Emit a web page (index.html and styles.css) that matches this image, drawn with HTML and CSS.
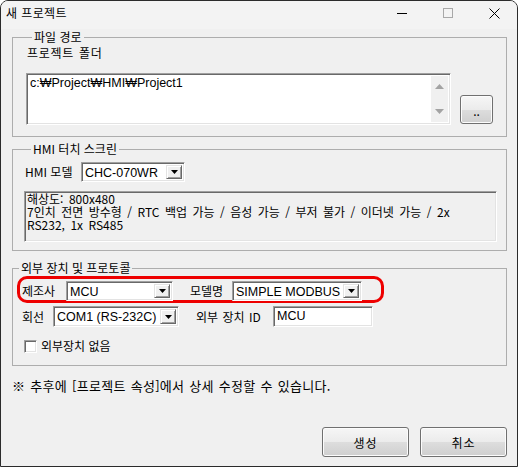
FILE: index.html
```html
<!DOCTYPE html>
<html lang="ko">
<head>
  <meta charset="UTF-8">
  <meta name="viewport" content="width=device-width, initial-scale=1.0">
  <title>새 프로젝트</title>
  <link rel="stylesheet" href="styles.css">
</head>
<body>
  <div class="window">
    <!-- Title bar -->
    <div class="titlebar">
      <span class="title">새 프로젝트</span>
      <div class="caption">
        <span class="caption-btn">
          <svg width="10" height="10" viewBox="0 0 10 10"><line x1="0" y1="5.5" x2="10" y2="5.5" stroke="#000" stroke-width="1"/></svg>
        </span>
        <span class="caption-btn">
          <svg width="10" height="10" viewBox="0 0 10 10"><rect x="0.5" y="0.5" width="9" height="9" fill="none" stroke="#a8a8a8" stroke-width="1"/></svg>
        </span>
        <span class="caption-btn">
          <svg width="11" height="11" viewBox="0 0 11 11"><path d="M0.5 0.5 L10.5 10.5 M10.5 0.5 L0.5 10.5" stroke="#000" stroke-width="1"/></svg>
        </span>
      </div>
    </div>

    <div class="content">
      <fieldset class="group group-path">
        <legend>파일 경로</legend>
        <div class="field-label">프로젝트 폴더</div>
        <div class="path-row">
          <div class="path-box">
            <span class="path-text">c:₩Project₩HMI₩Project1</span>
            <div class="vscroll">
              <svg width="9" height="5" viewBox="0 0 9 5"><polygon points="0,5 9,5 4.5,0" fill="#a3a3a3"/></svg>
              <svg width="9" height="5" viewBox="0 0 9 5"><polygon points="0,0 9,0 4.5,5" fill="#a3a3a3"/></svg>
            </div>
          </div>
          <button class="btn btn-browse">..</button>
        </div>
      </fieldset>

      <fieldset class="group group-hmi">
        <legend>HMI 터치 스크린</legend>
        <div class="model-row">
          <span class="lbl lbl-model">HMI 모델</span>
          <div class="combo combo-model">
            <span class="combo-text">CHC-070WR</span>
            <span class="combo-btn"><svg width="7" height="4" viewBox="0 0 7 4"><polygon points="0,0 7,0 3.5,4" fill="#000"/></svg></span>
          </div>
        </div>
        <div class="info-box">해상도: 800x480<br>7인치 전면 방수형 / RTC 백업 가능 / 음성 가능 / 부저 불가 / 이더넷 가능 / 2x<br>RS232, 1x RS485</div>
      </fieldset>

      <fieldset class="group group-device">
        <legend>외부 장치 및 프로토콜</legend>
        <div class="device-row highlight">
          <span class="lbl lbl-maker">제조사</span>
          <div class="combo combo-maker">
            <span class="combo-text">MCU</span>
            <span class="combo-btn"><svg width="7" height="4" viewBox="0 0 7 4"><polygon points="0,0 7,0 3.5,4" fill="#000"/></svg></span>
          </div>
          <span class="lbl lbl-modelname">모델명</span>
          <div class="combo combo-modelname">
            <span class="combo-text">SIMPLE MODBUS</span>
            <span class="combo-btn"><svg width="7" height="4" viewBox="0 0 7 4"><polygon points="0,0 7,0 3.5,4" fill="#000"/></svg></span>
          </div>
        </div>
        <div class="device-row line-row">
          <span class="lbl lbl-line">회선</span>
          <div class="combo combo-line">
            <span class="combo-text">COM1 (RS-232C)</span>
            <span class="combo-btn"><svg width="7" height="4" viewBox="0 0 7 4"><polygon points="0,0 7,0 3.5,4" fill="#000"/></svg></span>
          </div>
          <span class="lbl lbl-id">외부 장치 ID</span>
          <div class="textbox">MCU</div>
        </div>
        <label class="check-row">
          <span class="checkbox"></span>
          <span>외부장치 없음</span>
        </label>
      </fieldset>

      <p class="note">※ 추후에 [프로젝트 속성]에서 상세 수정할 수 있습니다.</p>

      <div class="actions">
        <button class="btn btn-action">생성</button>
        <button class="btn btn-action">취소</button>
      </div>
    </div>
  </div>
</body>
</html>
```

FILE: styles.css
```css
/* Global */
* {
  box-sizing: border-box;
}

body {
  margin: 0;
  font-family: "Noto Sans CJK KR", "Liberation Sans", sans-serif;
  font-size: 12px;
  color: #000000;
  background: #ffffff;
}

.window {
  width: 518px;
  height: 467px;
  border: 1px solid #2b2b2b;
  border-radius: 8px 8px 0 0;
  background: #f0f0f0;
  overflow: hidden;
  display: flex;
  flex-direction: column;
}

/* Title bar */
.titlebar {
  height: 28px;
  display: flex;
  align-items: flex-start;
  padding-left: 5px;
  background: #f3f3f3;
}

.title {
  flex: 1;
  line-height: 16px;
  margin-top: 4px;
  letter-spacing: 0.4px;
}

.caption {
  display: flex;
}

.caption-btn {
  width: 46px;
  height: 24px;
  display: flex;
  align-items: center;
  justify-content: center;
}

.caption-btn svg {
  display: block;
}

.content {
  flex: 1;
  padding: 1px 10px 0 11px;
  display: flex;
  flex-direction: column;
}

/* Group boxes */
.group {
  margin: 0;
  border: 1px solid #adadad;
  min-inline-size: 0;
}

.group legend {
  margin-left: 6px;
  padding: 0 2px;
  line-height: 14px;
}

.group-path {
  padding: 0 12px 11px 13px;
}

.group-hmi {
  margin-top: 5px;
  padding: 0 9px 8px 12px;
}

.group-device {
  margin-top: 10px;
  padding: 0 9px 11px 0;
}

.field-label {
  margin: 1px 0 0 1px;
  line-height: 16px;
  letter-spacing: 0.7px;
  word-spacing: 1px;
}

/* Sunken edit boxes */
.path-box, .combo, .textbox, .info-box, .checkbox {
  border: 1px solid;
  border-color: #a0a0a0 #ffffff #ffffff #a0a0a0;
  box-shadow: inset 1px 1px #696969, inset -1px -1px #e3e3e3;
}

.path-row {
  margin-top: 12px;
  display: flex;
  align-items: flex-end;
  gap: 9px;
}

.path-box {
  width: 425px;
  height: 52px;
  background: #ffffff;
  display: flex;
  padding: 2px;
}

.path-text {
  flex: 1;
  font-family: "Liberation Sans", "DejaVu Sans", sans-serif;
  font-size: 12.5px;
  line-height: 15px;
  padding-left: 1px;
}

.vscroll {
  width: 17px;
  background: #f0f0f0;
  display: flex;
  flex-direction: column;
  align-items: center;
  justify-content: space-between;
  padding: 8px 0 8px;
}

.vscroll svg {
  display: block;
}

/* Buttons */
.btn {
  font-family: "Noto Sans CJK KR", sans-serif;
  font-size: 12px;
  color: #000000;
  border: 1px solid #707070;
  border-radius: 3px;
  background: linear-gradient(#f6f6f6, #ebebeb 50%, #dddddd 51%, #cfcfcf);
  box-shadow: inset 0 0 0 1px #fcfcfc;
  padding: 0;
  cursor: pointer;
}

.btn-browse {
  width: 33px;
  height: 29px;
  margin-bottom: 1px;
  line-height: 12px;
  padding-top: 2px;
}

.btn-action {
  width: 87px;
  height: 30px;
  letter-spacing: 1px;
}

/* Labels and combos */
.lbl {
  line-height: 16px;
  flex: none;
}

.model-row {
  margin-top: 6px;
  display: flex;
  align-items: center;
}

.lbl-model {
  width: 56px;
}

.combo {
  height: 20px;
  background: #ffffff;
  display: flex;
  align-items: stretch;
  padding: 2px;
  flex: none;
}

.combo-text {
  flex: 1;
  font-family: "Liberation Sans", sans-serif;
  font-size: 12.5px;
  line-height: 16px;
  padding-left: 1px;
  white-space: nowrap;
}

.combo-btn {
  width: 16px;
  background: #f0f0f0;
  border: 1px solid;
  border-color: #e3e3e3 #696969 #696969 #e3e3e3;
  box-shadow: inset 1px 1px #ffffff, inset -1px -1px #a0a0a0;
  display: flex;
  align-items: center;
  justify-content: center;
}

.combo-btn svg {
  display: block;
}

.combo-model {
  width: 104px;
}

.info-box {
  margin: 9px 0 0 -1px;
  width: 473px;
  height: 51px;
  padding: 0 2px;
  line-height: 13px;
  word-spacing: 2.1px;
  white-space: nowrap;
  background: #f0f0f0;
}

/* External device rows */
.device-row {
  display: flex;
  align-items: center;
}

.highlight {
  margin: 1px 0 0 4px;
  width: 367px;
  height: 27px;
  border: 3px solid #ee0000;
  border-radius: 10px;
  padding: 2px 0 0 2px;
  align-items: flex-start;
}

.lbl-maker {
  width: 44px;
  margin-top: 2px;
}

.combo-maker {
  width: 107px;
}

.lbl-modelname {
  width: 42px;
  margin: 2px 0 0 17px;
}

.combo-modelname {
  width: 130px;
}

.line-row {
  margin: 3px 0 0 9px;
}

.lbl-line {
  width: 31px;
}

.combo-line {
  width: 126px;
  height: 21px;
}

.lbl-id {
  width: 77px;
  margin-left: 17px;
  word-spacing: 1px;
}

.textbox {
  width: 100px;
  height: 21px;
  background: #ffffff;
  padding: 2px 3px;
  font-family: "Liberation Sans", sans-serif;
  font-size: 12.5px;
  line-height: 14px;
}

.check-row {
  margin: 11px 0 0 11px;
  display: flex;
  align-items: center;
  gap: 4px;
  line-height: 16px;
}

.checkbox {
  width: 13px;
  height: 13px;
  background: #ffffff;
}

.note {
  margin: 12px 0 0;
  font-size: 13px;
  line-height: 16px;
  letter-spacing: 0.3px;
  word-spacing: 1px;
}

.actions {
  margin-top: 33px;
  display: flex;
  justify-content: flex-end;
  gap: 11px;
}
```
